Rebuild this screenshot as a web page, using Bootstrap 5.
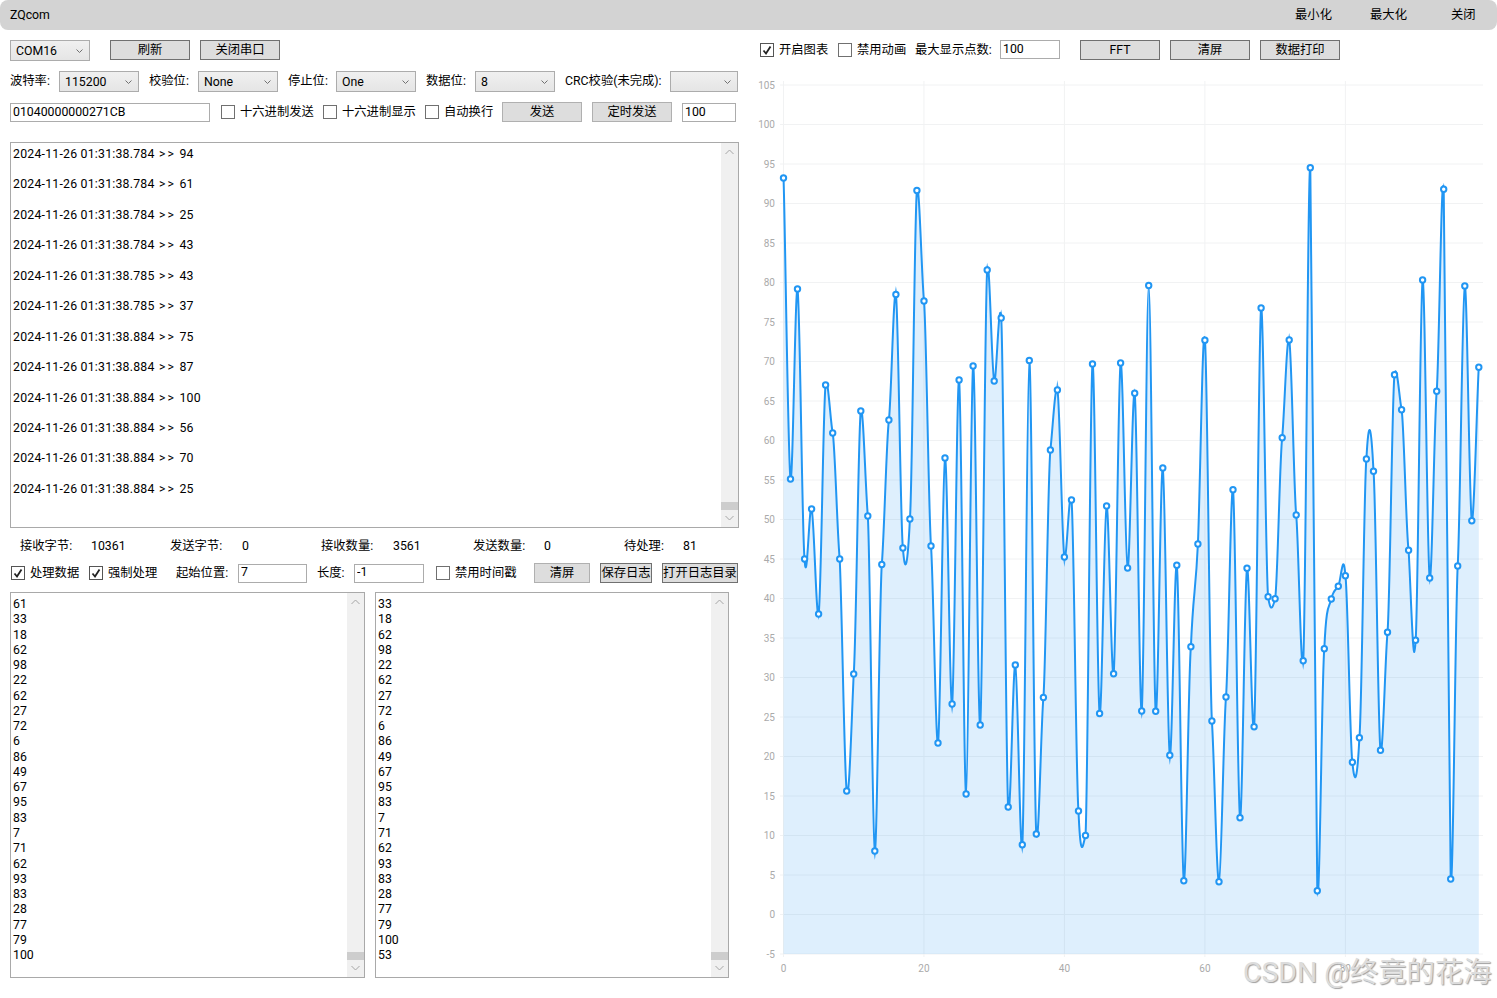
<!DOCTYPE html>
<html lang="zh-CN">
<head>
<meta charset="utf-8">
<title>ZQcom</title>
<link rel="stylesheet" href="https://cdn.jsdelivr.net/npm/bootstrap@5.3.0/dist/css/bootstrap.min.css">
<style>
html,body{height:100%;margin:0;background:#fff;overflow:hidden}
body{font-family:"Roboto","Noto Sans CJK SC",sans-serif;font-size:12.3px;color:#000;line-height:15.3px}
.app{width:1497px;height:998px;position:relative;overflow:hidden}
.tbar{height:30px;background:#d3d3d3;border-radius:8px;padding:2px 21px 0 10px}
.tbar-btn{width:75px;text-align:center}
.tbar-end{width:25px;margin-left:25px;white-space:nowrap}
.cols{height:968px}
.leftc{width:750px;padding-left:10px}
.rightc{width:747px}
.r1{margin-top:10px;height:21px}
.r2{margin-top:10px;height:21px}
.r3{margin-top:10px;height:20px}
.gap10{column-gap:10px}
.ctl-select.form-select{height:21px;min-height:21px;padding:1px 0 0 5px;border:1px solid #acacac;border-radius:0;font-size:12.3px;line-height:18px;color:#000;
background-image:url("data:image/svg+xml,%3Csvg xmlns='http://www.w3.org/2000/svg' width='7' height='4'%3E%3Cpath d='M.5.5 3.5 3.5 6.5.5' fill='none' stroke='%23707070'/%3E%3C/svg%3E"),linear-gradient(#f0f0f0,#e5e5e5);background-repeat:no-repeat;background-position:right 6px center,0 0;background-size:7px 4px,100% 100%}
.wbtn.btn{height:20px;padding:1px 0 0;border:1px solid #707070;border-radius:0;background:#ddd;color:#000;font-size:12.3px;line-height:17px;white-space:nowrap;flex:none}
.wbtn.soft{border-color:#b0b0b0}
.wtxt.form-control{height:19px;min-height:19px;padding:0 2px 2px;border:1px solid #acacac;border-radius:0;font-size:12.3px;line-height:15px;color:#000;background:#fff}
.r3 .wtxt.form-control{padding-bottom:0}
.wchk.form-check-input{width:14px;height:14px;margin-top:0;border:1px solid #707070;border-radius:0;background-color:#fff;flex:none}
.wchk.form-check-input:checked{background-color:#fff;border-color:#555;background-image:url("data:image/svg+xml,%3Csvg xmlns='http://www.w3.org/2000/svg' width='12' height='12'%3E%3Cpath d='M2.5 6.5 5 9.5 9.5 2.5' fill='none' stroke='%23222' stroke-width='1.8'/%3E%3C/svg%3E");background-size:12px 12px}
.nowr{white-space:nowrap;flex:none}
span.nowr,.st{padding-top:1px}
.w37{width:37px}.w38{width:38px}.w39{width:39px}.w95{width:95px}
.w80{width:80px}.w68{width:68px}.w200{width:200px}.w54{width:54px}
.w56{width:56px}.w52{width:52px}.w76{width:76px}.w70{width:70px}.w69{width:69px}.w60{width:60px}
.lbl6{width:73px;margin-left:5px}.lbl4{width:48px;margin-left:5px}.lbl5{width:59px;margin-left:5px}
.log-box{margin-top:20px;width:729px;height:386px;border:1px solid #a9a9a9;background:#fff}
.log-text{flex:1;padding:4px 2px 0 2px}
.log-line{height:30.45px;white-space:nowrap;letter-spacing:.22px}
.sep{letter-spacing:2.2px;margin-left:1px}
.sbar{width:17px;background:#f0f0f0;flex:none}
.sb-arrow{height:17px;flex:none}
.sb-thumb{height:8px;background:#cdcdcd;flex:none}
.stats{height:18px;margin-top:9px}
.st{flex:none}
.s1{width:71px;margin-left:10px}.s2{width:79px}.s3{width:72px}.s4{width:79px}.s5{width:72px}.s6{width:80px}.s7{width:71px}.s8{width:80px}.s9{width:59px}
.r5{margin-top:8px;height:20px}
.lists{margin-top:9px;column-gap:10px}
.lbox{height:386px;border:1px solid #a9a9a9;background:#fff}
.lbox-a{width:355px}.lbox-b{width:354px}
.ltext{flex:1;padding:4px 2px 0 2px;line-height:15.26px}
.rtop{margin-top:10px;height:20px;padding-left:10px}
.ml1{margin-left:1px}.ml10{margin-left:10px}.ml11{margin-left:11px}.ml12{margin-left:12px}.ml20{margin-left:20px}.w75{width:75px}
.rtop .wtxt.form-control{height:19px;align-self:flex-start}
.chart{display:block;margin-top:18px}
.chart text{font-family:"Roboto",sans-serif;font-size:10px;fill:#aaa}
.wmark{position:absolute;left:1243px;top:955px;font-family:"Roboto","Noto Sans CJK SC",sans-serif;font-size:28.4px;line-height:36px;color:#dcdcdc;text-shadow:1px 1px 1px #a0a0a0;white-space:nowrap;pointer-events:none}
</style>
</head>
<body>
<div class="app">
  <div class="tbar d-flex align-items-center">
    <div class="flex-grow-1">ZQcom</div>
    <div class="tbar-btn">最小化</div>
    <div class="tbar-btn">最大化</div>
    <div class="tbar-end">关闭</div>
  </div>
  <div class="cols d-flex">
    <div class="leftc">
      <div class="r1 d-flex align-items-start">
        <select class="form-select ctl-select w80 nowr"><option>COM16</option></select>
        <button type="button" class="btn wbtn w80 ml20">刷新</button>
        <button type="button" class="btn wbtn w80 ml10">关闭串口</button>
      </div>
      <div class="r2 d-flex align-items-center gap10">
        <span class="nowr w39">波特率:</span><select class="form-select ctl-select w80 nowr"><option>115200</option></select>
        <span class="nowr w39">校验位:</span><select class="form-select ctl-select w80 nowr"><option>None</option></select>
        <span class="nowr w38">停止位:</span><select class="form-select ctl-select w80 nowr"><option>One</option></select>
        <span class="nowr w39">数据位:</span><select class="form-select ctl-select w80 nowr"><option>8</option></select>
        <span class="nowr w95">CRC校验(未完成):</span><select class="form-select ctl-select w68 nowr"><option></option></select>
      </div>
      <div class="r3 d-flex align-items-center">
        <input class="form-control wtxt w200 nowr" value="01040000000271CB">
        <input type="checkbox" class="form-check-input wchk ml11"><span class="nowr lbl6">十六进制发送</span>
        <input type="checkbox" class="form-check-input wchk ml10"><span class="nowr lbl6">十六进制显示</span>
        <input type="checkbox" class="form-check-input wchk ml10"><span class="nowr lbl4">自动换行</span>
        <button type="button" class="btn wbtn soft w80 ml10">发送</button>
        <button type="button" class="btn wbtn soft w80 ml10">定时发送</button>
        <input class="form-control wtxt w54 ml10 nowr" value="100">
      </div>
      <div class="log-box d-flex">
        <div class="log-text" id="logText"></div>
        <div class="sbar d-flex flex-column">
          <svg class="sb-arrow" width="17" height="17" viewBox="0 0 17 17"><path d="M4.5 11l4-4 4 4" fill="none" stroke="#a6a6a6"/></svg>
          <div class="flex-grow-1"></div>
          <div class="sb-thumb"></div>
          <svg class="sb-arrow" width="17" height="17" viewBox="0 0 17 17"><path d="M4.5 6l4 4 4-4" fill="none" stroke="#a6a6a6"/></svg>
        </div>
      </div>
      <div class="stats d-flex align-items-center">
        <span class="st s1">接收字节:</span><span class="st s2">10361</span>
        <span class="st s3">发送字节:</span><span class="st s4">0</span>
        <span class="st s5">接收数量:</span><span class="st s6">3561</span>
        <span class="st s7">发送数量:</span><span class="st s8">0</span>
        <span class="st s9">待处理:</span><span class="st">81</span>
      </div>
      <div class="r5 d-flex align-items-center">
        <input type="checkbox" class="form-check-input wchk ml1" checked><span class="nowr lbl4">处理数据</span>
        <input type="checkbox" class="form-check-input wchk ml11" checked><span class="nowr lbl4">强制处理</span>
        <span class="nowr w52 ml20">起始位置:</span>
        <input class="form-control wtxt w69 ml10 nowr" value="7">
        <span class="nowr ml10 w37">长度:</span>
        <input class="form-control wtxt w70 nowr" value="-1">
        <input type="checkbox" class="form-check-input wchk ml12"><span class="nowr lbl5">禁用时间戳</span>
        <button type="button" class="btn wbtn soft w56 ml20">清屏</button>
        <button type="button" class="btn wbtn w52 ml10">保存日志</button>
        <button type="button" class="btn wbtn w76 ml10">打开日志目录</button>
      </div>
      <div class="lists d-flex">
        <div class="lbox lbox-a d-flex">
          <div class="ltext" id="listA"></div>
          <div class="sbar d-flex flex-column">
            <svg class="sb-arrow" width="17" height="17" viewBox="0 0 17 17"><path d="M4.5 11l4-4 4 4" fill="none" stroke="#a6a6a6"/></svg>
            <div class="flex-grow-1"></div>
            <div class="sb-thumb"></div>
            <svg class="sb-arrow" width="17" height="17" viewBox="0 0 17 17"><path d="M4.5 6l4 4 4-4" fill="none" stroke="#a6a6a6"/></svg>
          </div>
        </div>
        <div class="lbox lbox-b d-flex">
          <div class="ltext" id="listB"></div>
          <div class="sbar d-flex flex-column">
            <svg class="sb-arrow" width="17" height="17" viewBox="0 0 17 17"><path d="M4.5 11l4-4 4 4" fill="none" stroke="#a6a6a6"/></svg>
            <div class="flex-grow-1"></div>
            <div class="sb-thumb"></div>
            <svg class="sb-arrow" width="17" height="17" viewBox="0 0 17 17"><path d="M4.5 6l4 4 4-4" fill="none" stroke="#a6a6a6"/></svg>
          </div>
        </div>
      </div>
    </div>
    <div class="rightc">
      <div class="rtop d-flex align-items-center">
        <input type="checkbox" class="form-check-input wchk" checked><span class="nowr lbl4">开启图表</span>
        <input type="checkbox" class="form-check-input wchk ml11"><span class="nowr lbl4">禁用动画</span>
        <span class="nowr w75 ml10">最大显示点数:</span>
        <input class="form-control wtxt w60 ml10 nowr" value="100">
        <button type="button" class="btn wbtn w80 ml20">FFT</button>
        <button type="button" class="btn wbtn w80 ml10">清屏</button>
        <button type="button" class="btn wbtn w80 ml10">数据打印</button>
      </div>
      <svg class="chart" id="chart" width="747" height="920" viewBox="750 78 747 920" xmlns="http://www.w3.org/2000/svg"></svg>
    </div>
  </div>
  <div class="wmark">CSDN @终竟的花海</div>
</div>
<script src="https://cdn.jsdelivr.net/npm/bootstrap@5.3.0/dist/js/bootstrap.bundle.min.js"></script>
<script>
var logs=[["784",94],["784",61],["784",25],["784",43],["785",43],["785",37],["884",75],["884",87],["884",100],["884",56],["884",70],["884",25]];
document.getElementById('logText').innerHTML=logs.map(function(l){return '<div class="log-line">2024-11-26 01:31:38.'+l[0]+' <span class="sep">&gt;&gt;</span> '+l[1]+'</div>';}).join('');
var a=[61,33,18,62,98,22,62,27,72,6,86,49,67,95,83,7,71,62,93,83,28,77,79,100];
var b=[33,18,62,98,22,62,27,72,6,86,49,67,95,83,7,71,62,93,83,28,77,79,100,53];
document.getElementById('listA').innerHTML=a.map(function(v){return '<div>'+v+'</div>';}).join('');
document.getElementById('listB').innerHTML=b.map(function(v){return '<div>'+v+'</div>';}).join('');
var ys=[178,479,289,559,509,614,385,433,559,791,674,411,516,851,564.5,420,294.5,548,519,190.5,301,546,743,458,704,380,794,366,725,270,381,318,807,665,844.7,360.5,834,697.5,450,390,557,500,811,835.5,364,713.5,506,673.7,363,568,393.3,711,285.5,711.3,468,755.3,565.3,880.7,646.7,544,340.3,721,881.7,697,489.7,817.7,568.3,726.7,308,596.7,598.7,437.7,340,515,660.7,167.7,890.7,648.7,599,586.3,575.7,762.3,737.7,459,471.3,750.3,632.3,374.7,409.7,550.3,640.3,280,578,391.3,189.3,879,566,286,520.7,367.3];
/* per-segment tangent scale [out of start point, into end point] */
var seg={3:[1,1],8:[.8,.8],9:[.8,.8],17:[.8,.8],42:[1,.1],58:[1,1],59:[1,1],69:[.35,.35],71:[.6,.6],77:[1,1],78:[1,1],79:[1,1],81:[.9,.9],83:[1,1],89:[1,1]};
var tips=[[3,567],[5,620],[13,860],[16,286],[24,714],[29,262.7],[31,309.3],[34,854],[36,838],[39,380],[40,567],[50,388.3],[51,719],[55,765],[72,333],[74,670],[76,897],[92,585],[94,182.7]];
var X=function(i){return 783.5+i*7.0234;};
var pts=ys.map(function(y,i){return [X(i),y];});
var d='M'+pts[0][0].toFixed(1)+' '+pts[0][1].toFixed(1);
for(var i=0;i<pts.length-1;i++){
  var p0=pts[Math.max(i-1,0)],p1=pts[i],p2=pts[i+1],p3=pts[Math.min(i+2,pts.length-1)];
  var k=seg[i]||[.4,.4];
  d+='C'+(p1[0]+(p2[0]-p0[0])/6).toFixed(1)+' '+(p1[1]+k[0]*(p2[1]-p0[1])/6).toFixed(1)+' '+(p2[0]-(p3[0]-p1[0])/6).toFixed(1)+' '+(p2[1]-k[1]*(p3[1]-p1[1])/6).toFixed(1)+' '+p2[0].toFixed(1)+' '+p2[1].toFixed(1);
}
var s='';
for(var v=105;v>=-5;v-=5){var y=914.5-v*7.9;
  s+='<line x1="780" x2="1483" y1="'+y+'" y2="'+y+'" stroke="#f1f2f3"/>';
  s+='<text x="775" y="'+(y+3.5)+'" text-anchor="end">'+v+'</text>';}
[0,20,40,60,80].forEach(function(t){var x=783.5+t*7.0234;
  s+='<line x1="'+x+'" x2="'+x+'" y1="81" y2="957" stroke="#f1f2f3"/>';
  s+='<text x="'+x+'" y="972" text-anchor="middle">'+t+'</text>';});
var last=pts[pts.length-1];
s+='<path d="'+d+'L'+last[0]+' 954L783.5 954Z" fill="#2196f3" fill-opacity=".15"/>';
s+='<path d="'+d+'" fill="none" stroke="#2196f3" stroke-width="2"/>';
tips.forEach(function(t){var p=pts[t[0]];
  s+='<path d="M'+(p[0]-1.5).toFixed(1)+' '+p[1]+'L'+p[0].toFixed(1)+' '+t[1]+'L'+(p[0]+1.5).toFixed(1)+' '+p[1]+'Z" fill="#2196f3" fill-opacity=".8"/>';});
pts.forEach(function(p){s+='<circle cx="'+p[0].toFixed(1)+'" cy="'+p[1].toFixed(1)+'" r="2.7" fill="#fff" stroke="#2196f3" stroke-width="2"/>';});
document.getElementById('chart').innerHTML=s;
</script>
</body>
</html>
